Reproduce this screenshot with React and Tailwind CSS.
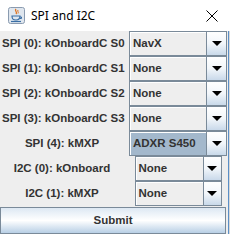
import React from "react";

function Arrow() {
  return (
    <svg width="10" height="6" viewBox="0 0 10 6">
      <path d="M0 0 H10 L5 5 Z" fill="#000" />
    </svg>
  );
}

function Combo({ value, outer, arrowW, selected }) {
  return (
    <div className={"flex h-[25px] border border-[#7a8a99] " + outer}>
      <div
        className={
          "flex-1 flex items-center pl-[2px] border-t border-l border-white font-bold text-[11.5px] text-[#333333] leading-none whitespace-nowrap " +
          (selected ? "bg-[#a3b8cc] border-[#a3b8cc]" : "bg-[#eeeeee]")
        }
      >
        {value}
      </div>
      <div
        className={
          "flex items-center justify-center border-l border-[#7a8a99] bg-gradient-to-b from-[#ffffff] via-[#f2f6fa] to-[#c9d9ea] " +
          arrowW
        }
      >
        <Arrow />
      </div>
    </div>
  );
}

function Row({ label, value, center, narrow, selected }) {
  return (
    <div className="flex h-[25px] items-center">
      <div
        className={
          "w-[128px] font-bold text-[11.5px] text-[#333333] whitespace-nowrap leading-none " +
          (center ? "text-center pr-[4px]" : "pl-[2px]")
        }
      >
        {label}
      </div>
      <div className="flex-1 flex justify-center">
        <Combo
          value={value}
          outer={narrow ? "w-[87px]" : "w-[98px]"}
          arrowW={narrow ? "w-[18px]" : "w-[20px]"}
          selected={selected}
        />
      </div>
    </div>
  );
}

export default function App() {
  return (
    <div className="w-[230px] h-[234px] bg-[#eeeeee] flex flex-col overflow-hidden font-['Liberation_Sans',Arial,sans-serif]">
      <div className="h-[31px] bg-white flex items-center shrink-0 pr-[10px]">
        <div className="w-[30px] flex justify-center pl-[2px]">
          <svg width="17" height="17" viewBox="0 0 17 17">
            <rect x="0.5" y="0.5" width="16" height="16" rx="2" fill="#dfe6ee" stroke="#8a9bb0" />
            <path d="M8 2 C6 4 10 5 8 7" stroke="#e0701a" strokeWidth="1.3" fill="none" />
            <path d="M10 3 C9 4.5 11 5 10 6.5" stroke="#e0701a" strokeWidth="1" fill="none" />
            <path d="M4 9 H12 C12 12 11 13 8 13 C5 13 4 12 4 9 Z" fill="none" stroke="#3a6ea5" strokeWidth="1.2" />
            <path d="M12 10 H13.5 V11.5 H12" fill="none" stroke="#3a6ea5" strokeWidth="1" />
            <path d="M3 14.5 H13" stroke="#3a6ea5" strokeWidth="1.2" />
          </svg>
        </div>
        <div className="flex-1 text-[12px] text-black font-['Noto_Sans',sans-serif] pl-[1px]">SPI and I2C</div>
        <svg width="12" height="12" viewBox="0 0 12 12" className="mr-[2px]">
          <path d="M0.5 0.5 L11.5 11.5 M11.5 0.5 L0.5 11.5" stroke="#000" strokeWidth="1" />
        </svg>
      </div>
      <div className="flex flex-1 min-h-0">
        <div className="w-[228px] flex flex-col">
          <Row label="SPI (0): kOnboardC S0" value="NavX" />
          <Row label="SPI (1): kOnboardC S1" value="None" />
          <Row label="SPI (2): kOnboardC S2" value="None" />
          <Row label="SPI (3): kOnboardC S3" value="None" />
          <Row label="SPI (4): kMXP" value="ADXR S450" center selected />
          <Row label="I2C (0): kOnboard" value="None" center narrow />
          <Row label="I2C (1): kMXP" value="None" center narrow />
          <div className="pr-[2px] pt-[1px]">
            <button className="w-full h-[27px] border border-[#7a8a99] bg-gradient-to-b from-[#dde8f3] via-[#ffffff] to-[#b8cfe5] font-bold text-[11.5px] text-[#333333] flex items-center justify-center">
              Submit
            </button>
          </div>
        </div>
        <div className="w-[1px] bg-[#5b8fc7]" />
        <div className="w-[1px] bg-[#d8d8d8]" />
      </div>
    </div>
  );
}
